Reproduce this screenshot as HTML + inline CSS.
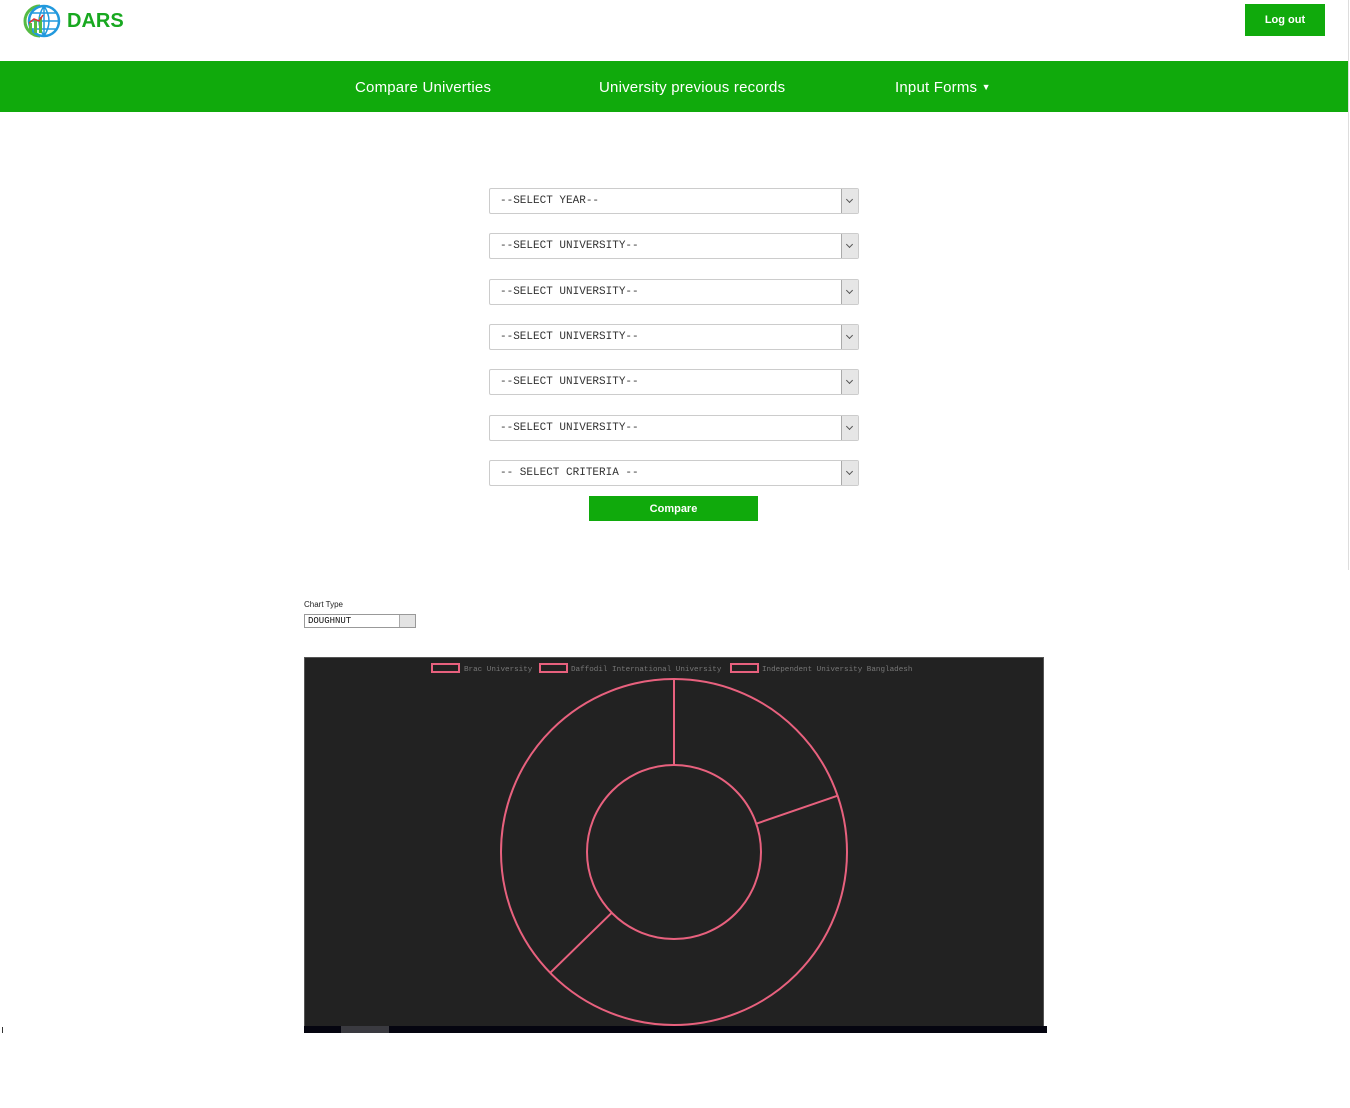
<!DOCTYPE html>
<html><head><meta charset="utf-8"><style>
*{margin:0;padding:0;box-sizing:border-box}
body{width:1350px;height:1108px;background:#fff;font-family:"Liberation Sans",sans-serif;position:relative;overflow:hidden}
.abs{position:absolute}
.nav{left:0;top:61px;width:1348px;height:51px;background:#10aa0c}
.nav span{position:absolute;top:18px;color:#fff;font-size:15px;letter-spacing:0.2px}
.sel{position:absolute;left:489px;width:370px;height:26px;border:1px solid #ccc;border-radius:2px;font-family:"Liberation Mono",monospace;font-size:11px;color:#333;padding:6px 0 0 10px;background:#fff}
.sel .ar{position:absolute;right:0;top:0;width:17px;height:24px;background:#e6e6e6;border-left:1px solid #aaa}
.sel .ar:after{content:"";position:absolute;left:5px;top:8px;width:4px;height:4px;border-right:1px solid #555;border-bottom:1px solid #555;transform:rotate(45deg)}
</style></head><body>
<svg class="abs" style="left:20px;top:3px" width="46" height="36" viewBox="0 0 46 36">
<path d="M20 3 A15 15 0 0 0 20 33" fill="none" stroke="#55bb44" stroke-width="3"/>
<circle cx="24" cy="18" r="15" fill="none" stroke="#2299dd" stroke-width="2.5"/>
<path d="M24 3 V33 M12 10 H36 M10 18 H38 M12 26 H36 M24 3 Q14 18 24 33 M24 3 Q34 18 24 33" fill="none" stroke="#2299dd" stroke-width="1.5"/>
<rect x="9" y="20" width="3" height="10" fill="#55bb44"/><rect x="14" y="17" width="3" height="13" fill="#55bb44"/><rect x="19" y="14" width="3" height="16" fill="#55bb44"/>
<path d="M9 20 L14 16 L19 18 L23 12" stroke="#dd3333" stroke-width="1.5" fill="none"/>
</svg>
<div class="abs" style="left:67px;top:10px;font-size:20px;font-weight:bold;color:#18a820">DARS</div>
<div class="abs" style="left:1245px;top:4px;width:80px;height:32px;background:#10aa0c;color:#fff;font-size:11px;font-weight:bold;text-align:center;line-height:33px">Log out</div>
<div class="abs" style="left:1348px;top:0;width:1px;height:570px;background:#ddd"></div>
<div class="abs nav"><span style="left:355px">Compare Univerties</span><span style="left:599px">University previous records</span><span style="left:895px">Input Forms <span style="position:static;font-size:9px;vertical-align:2px">▼</span></span></div>
<div class="sel" style="top:188px">--SELECT YEAR--<div class="ar"></div></div>
<div class="sel" style="top:233px">--SELECT UNIVERSITY--<div class="ar"></div></div>
<div class="sel" style="top:279px">--SELECT UNIVERSITY--<div class="ar"></div></div>
<div class="sel" style="top:324px">--SELECT UNIVERSITY--<div class="ar"></div></div>
<div class="sel" style="top:369px">--SELECT UNIVERSITY--<div class="ar"></div></div>
<div class="sel" style="top:415px">--SELECT UNIVERSITY--<div class="ar"></div></div>
<div class="sel" style="top:460px">-- SELECT CRITERIA --<div class="ar"></div></div>
<div class="abs" style="left:589px;top:496px;width:169px;height:25px;background:#10aa0c;color:#fff;font-size:11px;font-weight:bold;text-align:center;line-height:27px">Compare</div>
<div class="abs" style="left:304px;top:600px;font-size:8px;color:#222">Chart Type</div>
<div class="abs" style="left:304px;top:614px;width:112px;height:14px;border:1px solid #999;font-family:'Liberation Mono',monospace;font-size:9px;padding:1px 0 0 3px;color:#111">DOUGHNUT<div style="position:absolute;right:0;top:0;width:16px;height:12px;background:#e3e3e3;border-left:1px solid #aaa"></div></div>
<div class="abs" style="left:304px;top:657px;width:740px;height:370px;background:#222;border:1px solid #555"></div>
<div class="abs" style="left:304px;top:1026px;width:743px;height:7px;background:#050510"></div>
<div class="abs" style="left:341px;top:1026px;width:48px;height:7px;background:#3a3a40"></div>
<div class="abs" style="left:2px;top:1027px;width:1px;height:6px;background:#333"></div>
<svg class="abs" style="left:0;top:0" width="1350" height="1108">
<g fill="none" stroke="#e8617e" stroke-width="2">
<rect x="432" y="664" width="27" height="8"/><rect x="540" y="664" width="27" height="8"/><rect x="731" y="664" width="27" height="8"/>
<circle cx="674" cy="852" r="173"/><circle cx="674" cy="852" r="87"/>
<path d="M674 679 V765 M837.6 795.7 L756.3 823.7 M550.2 972.8 L611.7 912.8"/>
</g>
<g font-family="Liberation Mono,monospace" font-size="7.6" fill="#777">
<text x="464" y="671">Brac University</text><text x="571" y="671">Daffodil International University</text><text x="762" y="671">Independent University Bangladesh</text>
</g>
</svg>
</body></html>
